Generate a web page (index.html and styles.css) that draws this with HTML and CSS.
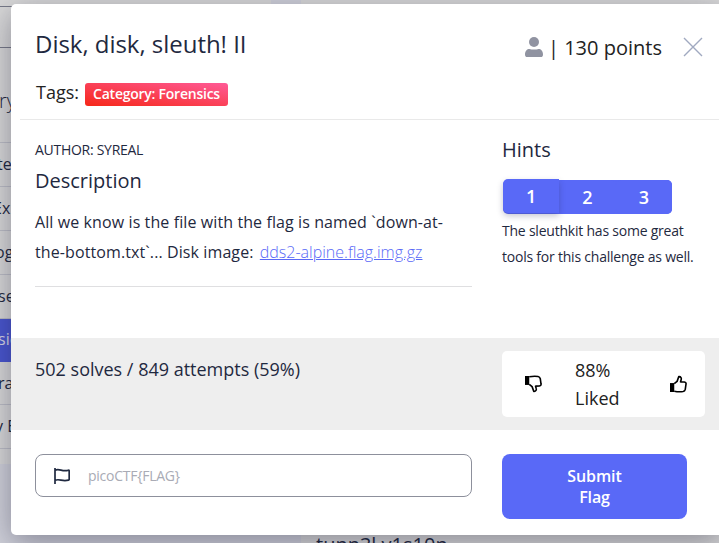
FILE: index.html
```html
<!DOCTYPE html>
<html lang="en">
<head>
<meta charset="utf-8">
<title>Disk, disk, sleuth! II</title>
<link rel="stylesheet" href="styles.css">
</head>
<body>
<div class="page">
  <aside class="sidebar">
    <div class="search"></div>
    <h3 class="filter-title"><span>ry</span></h3>
    <ul class="filters">
      <li><span class="a">te</span></li>
      <li><span class="b">Ex</span></li>
      <li><span class="c">og</span></li>
      <li><span class="d">se</span></li>
      <li class="active"><span class="e">sic</span></li>
      <li class="short"><span class="f">ra</span></li>
      <li><span class="g">y E</span></li>
    </ul>
  </aside>
  <main class="cards"><p>tunn3l v1s10n</p></main>
</div>
<div class="modal">
  <header class="head">
    <div class="head-main">
      <h1>Disk, disk, sleuth! II</h1>
      <div class="tags"><span class="tags-label">Tags:</span><span class="badge">Category: Forensics</span></div>
    </div>
    <div class="points">
      <svg class="user" viewBox="0 0 18 20"><circle cx="9" cy="5" r="5"/><path d="M0 17.500C0 14 2 12 4.500 12c2 .8 7 .8 9 0 2.500 0 4.500 2 4.500 5.500C18 19.500 17 20 16 20H2C1 20 0 19.500 0 17.500Z"/></svg>
      <span class="points-text">| 130 points</span>
    </div>
    <svg class="close" viewBox="0 0 20 20"><path d="M1 1 19 19M19 1 1 19"/></svg>
  </header>
  <div class="columns">
    <section class="desc">
      <div class="author">AUTHOR: SYREAL</div>
      <h2>Description</h2>
      <p>All we know is the file with the flag is named `down-at-<br>the-bottom.txt`... Disk image: <a href="#">dds2-alpine.flag.img.gz</a></p>
    </section>
    <section class="hints">
      <h2>Hints</h2>
      <div class="hint-tabs"><button class="on">1</button><button>2</button><button>3</button></div>
      <p>The sleuthkit has some great<br>tools for this challenge as well.</p>
    </section>
  </div>
  <div class="stats">
    <div class="solves">502 solves / 849 attempts (59%)</div>
    <div class="liked">
      <svg class="thumb down" viewBox="0 0 18 18"><path class="cuff" d="M0 8h4.500v9.500H0z"/><path d="M4.500 8.700 7.500 6.200 9.300 1.200c2.400-.3 3 1.800 2.500 3.300L11.200 6.700l4 .2c1.700.3 2 1.300 1.700 2.600l-.7 5c-.4 1.500-1.200 2.200-2.400 2.400-3.500.5-6 .3-9.300-.3"/></svg>
      <div class="liked-text">88%<br>Liked</div>
      <svg class="thumb" viewBox="0 0 18 18"><path class="cuff" d="M0 8h4.500v9.500H0z"/><path d="M4.500 8.700 7.500 6.200 9.300 1.200c2.400-.3 3 1.800 2.500 3.300L11.200 6.700l4 .2c1.700.3 2 1.300 1.700 2.600l-.7 5c-.4 1.500-1.200 2.200-2.400 2.400-3.500.5-6 .3-9.300-.3"/></svg>
    </div>
  </div>
  <footer class="submit">
    <label class="field">
      <svg class="flag" viewBox="0 0 16 16"><path d="M1 0v16M1 2.200c5-2 7 2 13.500 0 .4 0 .7.300.7.700v8.300c0 .5-.3.800-.7.900-6.500 1.700-8.500-1.600-13.500.1"/></svg>
      <span class="placeholder">picoCTF{FLAG}</span>
    </label>
    <button class="send">Submit<br>Flag</button>
  </footer>
</div>
</body>
</html>
```
FILE: styles.css
```css
* { box-sizing: border-box; }
body {
  margin: 0;
  width: 719px;
  height: 543px;
  overflow: hidden;
  position: relative;
  font-family: "Open Sans", "Noto Sans", sans-serif;
  color: #1f2940;
  background: #d0d1da;
}
h1, h2, h3, p, ul { margin: 0; padding: 0; font-weight: 400; }
button { border: 0; padding: 0; font: inherit; color: #fff; background: #5969f7; }
.page { display: flex; height: 543px; }
.sidebar { width: 271px; height: 464px; background: #d8d8d8; overflow: hidden; }
.search { height: 42px; margin-top: 6px; border: 1px solid #777a88; border-left: 0; }
.filter-title { height: 94px; width: 15px; padding: 38px 0 0 0; margin-left: -1px; font-size: 20px; line-height: 30px; font-weight: 300; }
.filters { list-style: none; border-top: 1px solid #bdbec6; }
.filters li { height: 44px; width: 271px; border-bottom: 1px solid #bdbec6; font-size: 16px; line-height: 43px; white-space: nowrap; }
.filters .a { margin-left: -3px; }
.filters .b { margin-left: -7px; }
.filters .c { margin-left: -5px; }
.filters .d { margin-left: -2px; }
.filters .e { margin-left: -2px; }
.filters .f { margin-left: -2px; }
.filters .g { margin-left: -5px; }
.filters .active { height: 43px; line-height: 41px; background: #4956cf; color: #d8d8e8; border-color: #4956cf; }
.filters .short { height: 43px; line-height: 42px; }
.cards { align-self: flex-end; width: 418px; height: 543px; margin-left: 30px; padding: 530px 0 0 15px; background: #d8d8d8; font-size: 20px; line-height: 30px; overflow: hidden; }

.modal {
  position: absolute;
  left: 11px;
  top: 4px;
  width: 712px;
  height: 531px;
  background: #fff;
  border-radius: 5px;
  box-shadow: 0 8px 32px rgba(20, 20, 45, .4);
}
.head { display: flex; height: 116px; margin-left: 9px; padding-left: 15px; border-bottom: 1px solid #e9e9e9; }
.head-main { width: 490px; padding-top: 22px; }
h1 { font-size: 24px; line-height: 36px; letter-spacing: -.03px; }
.tags { display: flex; align-items: flex-start; padding-top: 15px; }
.tags-label { width: 50px; padding-left: 1px; color: #222; font-size: 18px; line-height: 30px; }
.badge { width: 143px; height: 23px; margin-top: 6px; border-radius: 3px; color: #fff; text-align: center; font-size: 14px; font-weight: 600; line-height: 22px; letter-spacing: -.24px; white-space: nowrap; background: linear-gradient(to top right, #f62718, #ff5a97); }
.points { display: flex; width: 138px; color: #222; }
.user { width: 18px; height: 20px; margin-top: 33px; fill: #9093a1; flex: none; }
.points-text { padding: 29px 0 0 5px; font-size: 20px; line-height: 30px; white-space: nowrap; }
.close { width: 20px; height: 20px; margin: 33px 0 0 20px; fill: none; stroke: #a0a9c0; stroke-width: 1.4; flex: none; }
.columns { display: flex; height: 218px; padding-left: 24px; }
.desc { width: 437px; height: 167px; padding-top: 19px; border-bottom: 1px solid #dfdfe1; }
.author { font-size: 14px; line-height: 22px; letter-spacing: -.28px; }
h2 { font-size: 20px; line-height: 30px; }
.desc h2 { margin-top: 5px; }
.desc p { margin-top: 11px; font-size: 16px; line-height: 30px; letter-spacing: .1px; white-space: nowrap; }
a { margin-left: 2px; color: #5969f7; font-weight: 300; letter-spacing: 0; }
.hints { margin-left: 30px; padding-top: 15px; }
.hint-tabs { display: flex; width: 169px; height: 34px; margin: 15px 0 0 1px; border-radius: 5px; background: #5969f7; }
.hint-tabs button { flex: 1; border-radius: 5px; font-size: 18px; font-weight: 600; line-height: 34px; }
.hint-tabs .on { transform: translateY(-1px); border-radius: 5px 0 0 5px; box-shadow: 0 3px 6px rgba(30, 30, 70, .25); }
.hints p { margin-top: 4px; font-size: 14px; line-height: 26px; letter-spacing: -.22px; white-space: nowrap; }
.stats { display: flex; height: 92px; padding: 13px 0 0 24px; background: #eee; }
.solves { width: 467px; padding-top: 3px; font-size: 18px; line-height: 30px; }
.liked { display: flex; width: 203px; height: 66px; padding: 0 18px 0 23px; align-items: center; border-radius: 5px; background: #fff; }
.liked-text { width: 95px; margin-left: 33px; font-size: 18px; line-height: 28px; color: #222; }
.thumb { width: 17px; height: 18px; flex: none; fill: none; stroke: #000; stroke-width: 1.7; stroke-linejoin: round; }
.thumb .cuff { fill: #000; stroke: none; }
.down { transform: scaleY(-1); }
.submit { display: flex; padding: 24px 0 0 24px; }
.field { display: flex; align-items: center; width: 437px; height: 43px; border: 1px solid #8d909c; border-radius: 8px; padding-left: 18px; }
.flag { width: 16px; height: 16px; fill: none; stroke: #1f2940; stroke-width: 1.7; }
.placeholder { margin-left: 18px; font-size: 14px; letter-spacing: -.25px; color: #a9abb5; }
.send { width: 185px; height: 65px; margin-left: 30px; border-radius: 8px; font-size: 16px; font-weight: 600; line-height: 21px; letter-spacing: -.1px; }
```
